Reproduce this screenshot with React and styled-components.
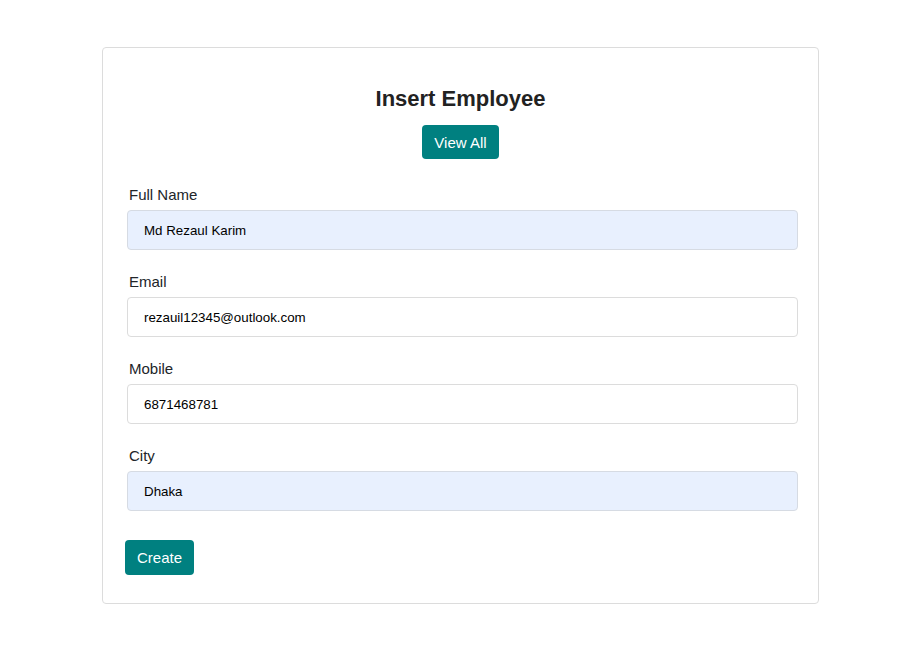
import React from "react";
import styled, { createGlobalStyle } from "styled-components";

const GlobalStyle = createGlobalStyle`
  body {
    margin: 0;
    background: #fff;
    font-family: "Liberation Sans", Arial, sans-serif;
    color: #212529;
  }
`;

const fields = [
  { label: "Full Name", value: "Md Rezaul Karim", filled: true },
  { label: "Email", value: "rezauil12345@outlook.com", filled: false },
  { label: "Mobile", value: "6871468781", filled: false },
  { label: "City", value: "Dhaka", filled: true },
];

function App() {
  return (
    <>
      <GlobalStyle />
      <Card>
        <Header>
          <Title>Insert Employee</Title>
          <Button type="button">View All</Button>
        </Header>
        <Form onSubmit={(e) => e.preventDefault()}>
          {fields.map((f) => (
            <Group key={f.label}>
              <Label>{f.label}</Label>
              <Input defaultValue={f.value} $filled={f.filled} />
            </Group>
          ))}
          <Submit>
            <Button type="submit" $tall>
              Create
            </Button>
          </Submit>
        </Form>
      </Card>
    </>
  );
}

const Card = styled.div`
  box-sizing: border-box;
  width: 717px;
  margin: 47px 0 0 102px;
  padding: 38px 22px 28px 22px;
  border: 1px solid #dcdcdc;
  border-radius: 4px;
  background: #fff;
`;

const Header = styled.div`
  display: flex;
  flex-direction: column;
  align-items: center;
  gap: 13px;
  margin-bottom: 25px;
`;

const Title = styled.h2`
  margin: 0;
  font-size: 22px;
  line-height: 26px;
  font-weight: bold;
  color: #222;
`;

const Button = styled.button`
  height: ${(p) => (p.$tall ? "35px" : "34px")};
  padding: 0 12px;
  border: none;
  border-radius: 4px;
  background: #008080;
  color: #fff;
  font-family: "Liberation Sans", Arial, sans-serif;
  font-size: 15px;
  cursor: pointer;
`;

const Form = styled.form`
  display: flex;
  flex-direction: column;
  gap: 21px;
  padding-left: 2px;
`;

const Group = styled.div`
  display: flex;
  flex-direction: column;
  gap: 4px;
`;

const Label = styled.label`
  padding-left: 2px;
  font-size: 15px;
  line-height: 22px;
  color: #212529;
`;

const Input = styled.input`
  box-sizing: border-box;
  width: 671px;
  height: 40px;
  padding: 0 16px;
  border: 1px solid ${(p) => (p.$filled ? "#d6dbe3" : "#dcdcdc")};
  border-radius: 4px;
  background: ${(p) => (p.$filled ? "#e8f0fe" : "#fff")};
  color: #000;
  font-family: "Liberation Sans", Arial, sans-serif;
  font-size: 13.33px;
  outline: none;
`;

const Submit = styled.div`
  display: flex;
  margin: 8px 0 0 -2px;
`;

export default App;
